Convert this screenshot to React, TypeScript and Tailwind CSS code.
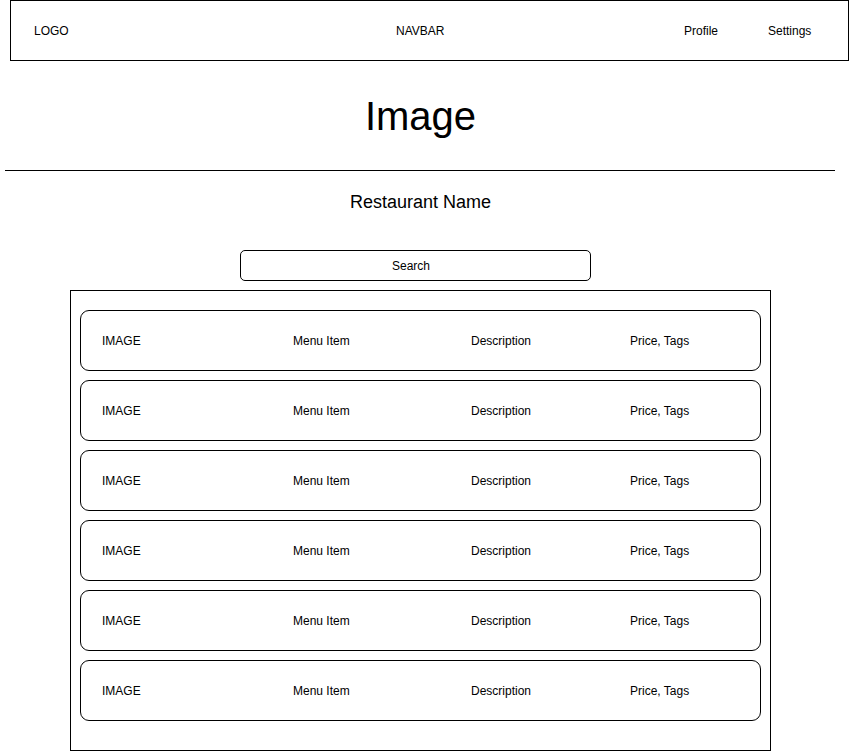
import React from "react";

const rows = [0, 1, 2, 3, 4, 5];

export default function App() {
  return (
    <div
      className="w-[851px] h-[751px] overflow-hidden bg-white text-black"
      style={{ fontFamily: '"Liberation Sans", Arial, sans-serif' }}
    >
      <div className="ml-[10px] w-[839px] h-[61px] border border-black flex items-center text-[12px] leading-none">
        <span className="pl-[23px] w-[385px] shrink-0">LOGO</span>
        <span className="w-[288px] shrink-0">NAVBAR</span>
        <span className="w-[84px] shrink-0">Profile</span>
        <span>Settings</span>
      </div>

      <div className="w-[841px] mt-[35px] text-center text-[40px] leading-none">Image</div>

      <div className="mt-[34px] ml-[5px] w-[830px] h-px bg-black" />

      <div className="w-[841px] mt-[22px] text-center text-[18px] leading-none">Restaurant Name</div>

      <div className="mt-[39px] ml-[240px] w-[351px] h-[31px] border border-black rounded-[5px] flex items-center pl-[151px] text-[12px] leading-none">
        Search
      </div>

      <div className="mt-[9px] ml-[70px] w-[701px] border border-black pt-[19px] px-[9px] pb-[29px] flex flex-col gap-[9px]">
        {rows.map((r) => (
          <div
            key={r}
            className="h-[61px] border border-black rounded-[9px] flex items-center pl-[21px] text-[12px] leading-none"
          >
            <span className="w-[191px] shrink-0">IMAGE</span>
            <span className="w-[178px] shrink-0">Menu Item</span>
            <span className="w-[159px] shrink-0">Description</span>
            <span>Price, Tags</span>
          </div>
        ))}
      </div>
    </div>
  );
}
